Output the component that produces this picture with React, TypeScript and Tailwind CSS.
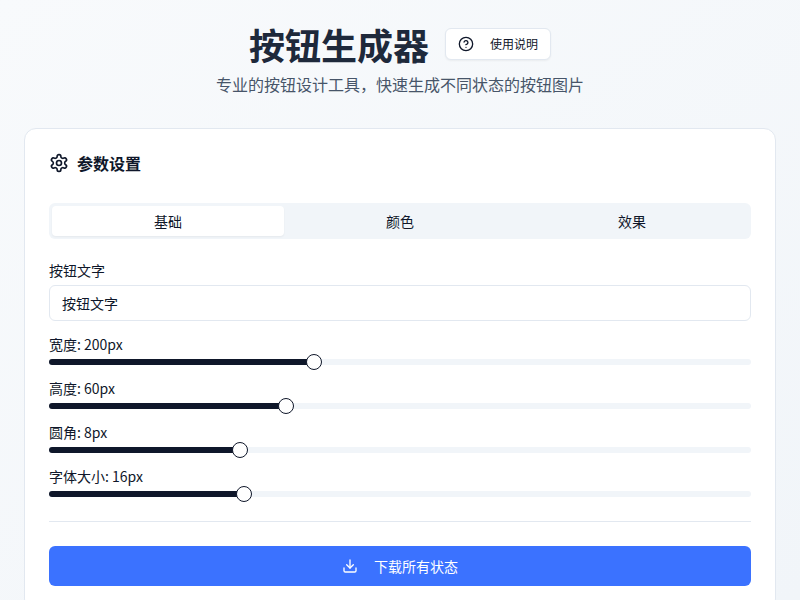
import { CircleHelp, Download } from "lucide-react";

const sliders = [
  { label: "宽度: 200px", thumb: 265 },
  { label: "高度: 60px", thumb: 237 },
  { label: "圆角: 8px", thumb: 191 },
  { label: "字体大小: 16px", thumb: 195 },
];

function GearIcon() {
  return (
    <svg
      width="20"
      height="20"
      viewBox="0 0 24 24"
      fill="none"
      stroke="currentColor"
      strokeWidth="2"
      strokeLinecap="round"
      strokeLinejoin="round"
      className="text-[#0f172a]"
    >
      <path d="M12.22 2h-.44a2 2 0 0 0-2 2v.18a2 2 0 0 1-1 1.73l-.43.25a2 2 0 0 1-2 0l-.15-.08a2 2 0 0 0-2.73.73l-.22.38a2 2 0 0 0 .73 2.73l.15.1a2 2 0 0 1 1 1.72v.51a2 2 0 0 1-1 1.74l-.15.09a2 2 0 0 0-.73 2.73l.22.38a2 2 0 0 0 2.73.73l.15-.08a2 2 0 0 1 2 0l.43.25a2 2 0 0 1 1 1.73V20a2 2 0 0 0 2 2h.44a2 2 0 0 0 2-2v-.18a2 2 0 0 1 1-1.73l.43-.25a2 2 0 0 1 2 0l.15.08a2 2 0 0 0 2.73-.73l.22-.39a2 2 0 0 0-.73-2.73l-.15-.08a2 2 0 0 1-1-1.74v-.5a2 2 0 0 1 1-1.74l.15-.09a2 2 0 0 0 .73-2.73l-.22-.38a2 2 0 0 0-2.73-.73l-.15.08a2 2 0 0 1-2 0l-.43-.25a2 2 0 0 1-1-1.73V4a2 2 0 0 0-2-2z" />
      <circle cx="12" cy="12" r="3" />
    </svg>
  );
}

function Slider({ label, thumb }: { label: string; thumb: number }) {
  return (
    <div className="flex h-[44px] flex-col">
      <div className="h-[22px] pt-px text-sm leading-[20px] text-[#0f172a]">{label}</div>
      <div className="relative -mt-[1px] h-[16px]">
        <div className="absolute left-0 right-0 top-[5px] h-[6px] rounded-full bg-[#f1f5f9]" />
        <div
          className="absolute left-0 top-[5px] h-[6px] rounded-full bg-[#0f172a]"
          style={{ width: thumb }}
        />
        <div
          className="absolute top-0 h-[16px] w-[16px] -translate-x-1/2 rounded-full border border-[#0f172a] bg-white"
          style={{ left: thumb }}
        />
      </div>
    </div>
  );
}

export default function App() {
  return (
    <div className="h-[600px] overflow-hidden bg-gradient-to-br from-[#f8fafc] to-[#f1f5f9] px-6 font-['Noto_Sans_CJK_SC','Noto_Sans',sans-serif]">
      <header className="flex flex-col items-center pt-[19px]">
        <div className="flex h-[50px] items-center gap-4">
          <h1 className="text-4xl font-bold leading-[50px] text-[#1e293b]">按钮生成器</h1>
          <button className="flex h-8 w-[106px] items-center justify-between rounded-md border border-[#e2e8f0] bg-white px-3 text-xs text-[#0f172a] shadow-xs">
            <CircleHelp size={16} />
            <span>使用说明</span>
          </button>
        </div>
        <p className="mt-[1px] text-base leading-[28px] text-[#475569]">
          专业的按钮设计工具，快速生成不同状态的按钮图片
        </p>
      </header>

      <main className="mt-[30px] rounded-xl border border-[#e2e8f0] bg-white px-6 pt-6 pb-6">
        <div className="flex h-[20px] items-center gap-2">
          <GearIcon />
          <span className="text-base font-bold text-[#0f172a]">参数设置</span>
        </div>

        <div className="mt-[30px] grid h-9 grid-cols-3 rounded-md bg-[#f1f5f9] p-[3px] text-sm text-[#0f172a]">
          <div className="flex items-center justify-center rounded-sm bg-white shadow-xs">基础</div>
          <div className="flex items-center justify-center">颜色</div>
          <div className="flex items-center justify-center">效果</div>
        </div>

        <label className="mt-[21px] block text-sm leading-[20px] text-[#0f172a]">按钮文字</label>
        <input
          readOnly
          value="按钮文字"
          className="mt-[5px] block h-9 w-full rounded-md border border-[#e2e8f0] bg-white px-3 text-sm text-[#0f172a] outline-none"
        />

        <div className="mt-[12px] flex flex-col">
          {sliders.map((s) => (
            <Slider key={s.label} label={s.label} thumb={s.thumb} />
          ))}
        </div>

        <div className="mt-[12px] h-px bg-[#e2e8f0]" />

        <button className="mt-6 flex h-10 w-full items-center justify-center gap-4 rounded-md bg-[#3b72ff] text-sm text-white">
          <Download size={16} />
          <span>下载所有状态</span>
        </button>
      </main>
    </div>
  );
}
